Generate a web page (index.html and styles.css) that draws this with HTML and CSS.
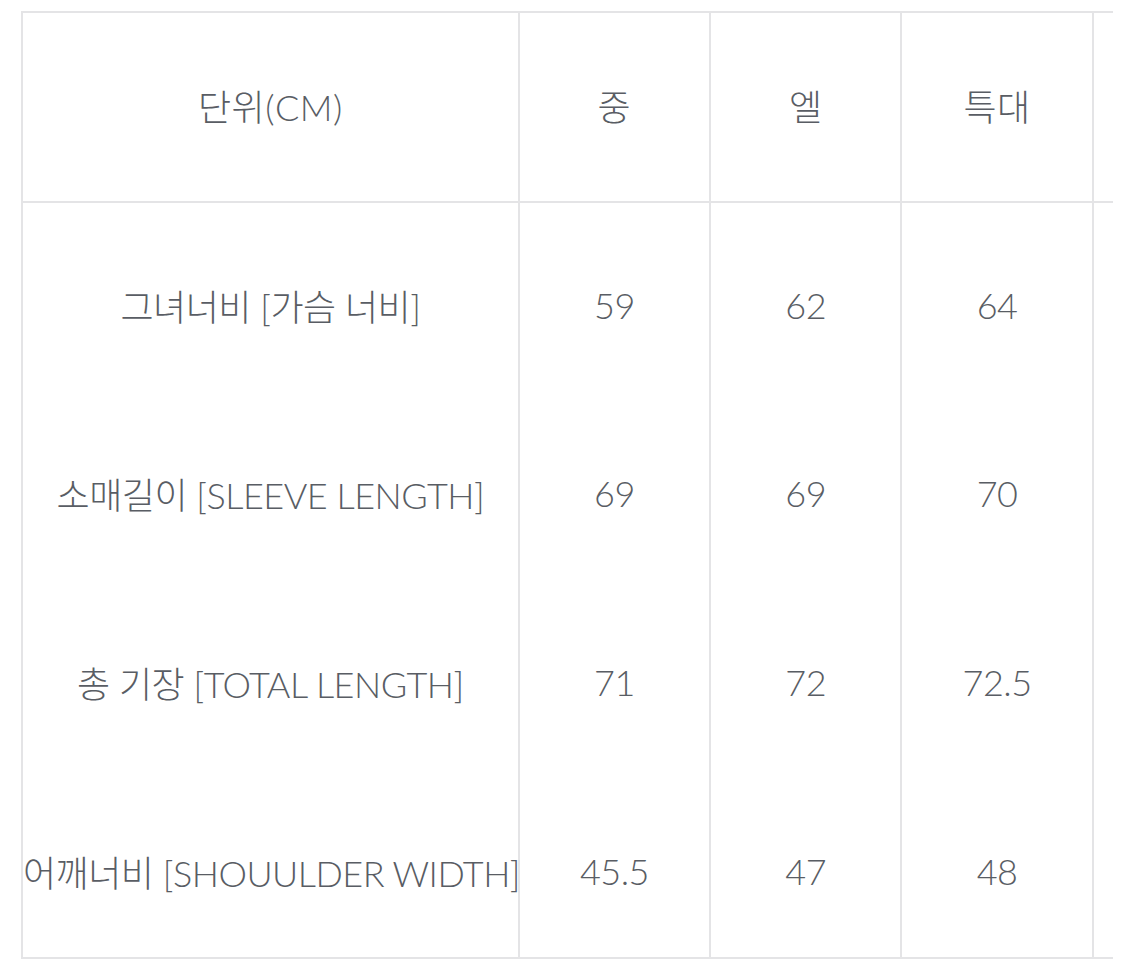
FILE: index.html
```html
<!DOCTYPE html>
<html lang="ko">
<head>
<meta charset="utf-8">
<title>사이즈</title>
<link rel="stylesheet" href="styles.css">
</head>
<body>
<div class="frame">
  <table class="size-table">
    <colgroup>
      <col class="c-label">
      <col class="c-size">
      <col class="c-size">
      <col class="c-size">
      <col class="c-size">
    </colgroup>
    <thead>
      <tr>
        <th>단위(CM)</th>
        <th>중</th>
        <th>엘</th>
        <th>특대</th>
        <th></th>
      </tr>
    </thead>
    <tbody>
      <tr>
        <td>그녀너비 [가슴 너비]</td>
        <td>59</td>
        <td>62</td>
        <td>64</td>
        <td></td>
      </tr>
      <tr>
        <td>소매길이 [SLEEVE LENGTH]</td>
        <td>69</td>
        <td>69</td>
        <td>70</td>
        <td></td>
      </tr>
      <tr>
        <td>총 기장 [TOTAL LENGTH]</td>
        <td>71</td>
        <td>72</td>
        <td>72.5</td>
        <td></td>
      </tr>
      <tr>
        <td>어깨너비 [SHOUULDER WIDTH]</td>
        <td>45.5</td>
        <td>47</td>
        <td>48</td>
        <td></td>
      </tr>
    </tbody>
  </table>
</div>
</body>
</html>
```

FILE: styles.css
```css
html, body {
  margin: 0;
  padding: 0;
  background: #ffffff;
}

.frame {
  margin: 11px 0 0 21px;
  width: 1092px;
  overflow: hidden;
}

.size-table {
  table-layout: fixed;
  border-collapse: collapse;
  width: 1264px;
  font-family: "Lato", "Noto Sans CJK KR", sans-serif;
  font-size: 36px;
  font-weight: 300;
  color: #595d64;
  white-space: nowrap;
}

.c-label { width: 496px; }
.c-size { width: 191px; }

.size-table th,
.size-table td {
  border-left: 2px solid #e4e4e6;
  border-right: 2px solid #e4e4e6;
  text-align: center;
  vertical-align: middle;
  padding: 0;
  font-weight: 300;
}

.size-table th {
  border-top: 2px solid #e4e4e6;
  border-bottom: 2px solid #e4e4e6;
  height: 190px;
  box-sizing: border-box;
  padding-bottom: 4px;
  letter-spacing: 0.5px;
}

.size-table td {
  height: 189px;
  box-sizing: border-box;
  padding-top: 15px;
  letter-spacing: -0.5px;
}

.size-table tbody tr:last-child td {
  border-bottom: 2px solid #e4e4e6;
}
```
